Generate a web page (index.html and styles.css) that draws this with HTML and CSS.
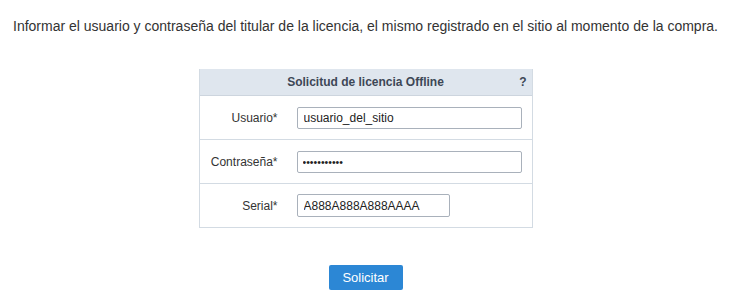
FILE: index.html
```html
<!DOCTYPE html>
<html lang="es">
<head>
<meta charset="utf-8">
<title>Solicitud de licencia Offline</title>
<link rel="stylesheet" href="styles.css">
</head>
<body>
<p class="intro">Informar el usuario y contraseña del titular de la licencia, el mismo registrado en el sitio al momento de la compra.</p>
<form class="panel">
  <div class="panel-head">
    <span class="panel-title">Solicitud de licencia Offline</span>
    <span class="help">?</span>
  </div>
  <div class="row">
    <label class="lbl" for="u">Usuario*</label>
    <input class="field wide" id="u" type="text" value="usuario_del_sitio">
  </div>
  <div class="row">
    <label class="lbl" for="p">Contraseña*</label>
    <input class="field wide pass" id="p" type="password" value="12345678901">
  </div>
  <div class="row">
    <label class="lbl" for="s">Serial*</label>
    <input class="field narrow" id="s" type="text" value="A888A888A888AAAA">
  </div>
</form>
<div class="actions">
  <button class="btn" type="button">Solicitar</button>
</div>
</body>
</html>
```
FILE: styles.css
```css
html, body {
  margin: 0;
  padding: 0;
  background: #fff;
  font-family: "Liberation Sans", Arial, sans-serif;
  color: #333;
}
.intro {
  margin: 18px 0 0;
  font-size: 14px;
  line-height: 16px;
  text-align: center;
  color: #333;
}
.panel {
  width: 332px;
  margin: 35px auto 0;
  border: 1px solid #d3dbe3;
  border-top: none;
  display: flex;
  flex-direction: column;
}
.panel-head {
  height: 26px;
  background: #dfe6ee;
  border-bottom: 1px solid #cdd5de;
  display: flex;
  align-items: center;
  justify-content: center;
  position: relative;
}
.panel-title {
  font-size: 12px;
  font-weight: bold;
  color: #3d4756;
}
.help {
  position: absolute;
  right: 5px;
  top: 6px;
  font-size: 12px;
  font-weight: bold;
  color: #3d4756;
}
.row {
  height: 43px;
  display: flex;
  align-items: center;
  border-bottom: 1px solid #d3dbe3;
}
.row:last-child {
  border-bottom: none;
}
.lbl {
  width: 78px;
  text-align: right;
  font-size: 12px;
  color: #333;
  margin-right: 19px;
}
.field {
  box-sizing: border-box;
  height: 22px;
  border: 1px solid #a9b1bb;
  border-radius: 2px;
  padding: 0 6px;
  font-family: "Liberation Sans", Arial, sans-serif;
  font-size: 12px;
  color: #222;
  background: #fff;
}
.pass {
  font-size: 10.5px;
  padding-left: 5px;
}
.wide { width: 225px; }
.narrow { width: 153px; height: 23px; }
.actions {
  display: flex;
  justify-content: center;
  margin-top: 37px;
}
.btn {
  width: 74px;
  height: 25px;
  background: #2c87d5;
  color: #fff;
  border: none;
  border-radius: 2px;
  font-family: "Liberation Sans", Arial, sans-serif;
  font-size: 13px;
  padding: 0;
}
```
